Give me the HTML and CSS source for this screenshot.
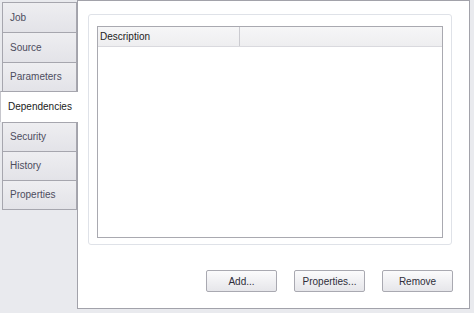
FILE: index.html
```html
<!DOCTYPE html>
<html lang="en">

<head>
    <meta charset="UTF-8">
    <title>Job Dependencies</title>
    <link rel="stylesheet" href="styles.css">
</head>

<body>
    <div class="window">
        <ul class="tabs">
            <li class="tab">Job</li>
            <li class="tab">Source</li>
            <li class="tab">Parameters</li>
            <li class="tab active">Dependencies</li>
            <li class="tab">Security</li>
            <li class="tab">History</li>
            <li class="tab">Properties</li>
        </ul>
        <div class="page">
            <div class="group">
                <div class="grid">
                    <div class="grid-head">
                        <div class="col col-desc">Description</div>
                        <div class="col"></div>
                    </div>
                </div>
            </div>
            <div class="buttons">
                <button class="btn">Add...</button>
                <button class="btn">Properties...</button>
                <button class="btn">Remove</button>
            </div>
        </div>
    </div>
</body>

</html>
```

FILE: styles.css
```css
* {
    margin: 0;
    padding: 0;
    box-sizing: border-box;
}

body {
    background-color: #e9eaee;
    font-family: "Liberation Sans", Arial, sans-serif;
    font-size: 10px;
    width: 474px;
    height: 313px;
    overflow: hidden;
}

li {
    list-style: none;
}

.window {
    display: flex;
    height: 309px;
    width: 470px;
}

.tabs {
    width: 78px;
    padding-top: 2px;
    position: relative;
    z-index: 1;
}

.tab {
    height: 29px;
    line-height: 28px;
    margin-left: 2px;
    margin-right: 1px;
    padding-left: 7px;
    color: #4d4d5e;
    background: linear-gradient(to bottom, #eeeef1, #e3e3e8);
    border: 1px solid #a6a6ae;
    border-bottom: none;
}

.tab:nth-child(-n+2) {
    height: 30px;
    line-height: 29px;
}

.tab:last-child {
    border-bottom: 1px solid #a6a6ae;
    height: 30px;
}

.tab.active {
    margin-left: 0;
    margin-right: 0;
    padding-left: 7px;
    height: 31px;
    line-height: 30px;
    color: #1a1a1a;
    background: #ffffff;
    border-right: none;
    border-left: 1px solid #c6c6cc;
}

.tab.active + .tab {
    border-top: 1px solid #a6a6ae;
}

.page {
    flex: 1;
    margin-left: -1px;
    background-color: #ffffff;
    border: 1px solid #a2a2aa;
    padding: 13px 17px 0 10px;
    display: flex;
    flex-direction: column;
}

.group {
    height: 231px;
    border: 1px solid #dfe2e8;
    border-radius: 3px;
    padding: 11px 8px 6px 8px;
}

.grid {
    height: 100%;
    border: 1px solid #a9a9b0;
    background-color: #ffffff;
}

.grid-head {
    display: flex;
    height: 20px;
    background: linear-gradient(to bottom, #f6f6f7, #eeeef0);
    border-bottom: 1px solid #d9d9de;
}

.col {
    flex: 1;
    line-height: 19px;
    padding-left: 2px;
    color: #222222;
}

.col-desc {
    flex: none;
    width: 142px;
    border-right: 1px solid #cbcbd0;
}

.buttons {
    display: flex;
    justify-content: flex-end;
    gap: 17px;
    margin-top: 25px;
    margin-right: -1px;
}

.btn {
    width: 71px;
    height: 22px;
    font-family: "Liberation Sans", Arial, sans-serif;
    font-size: 10px;
    color: #2e2e3a;
    background: linear-gradient(to bottom, #fbfbfc, #e6e6ea);
    border: 1px solid #a9a9b1;
    border-radius: 2px;
}
```
